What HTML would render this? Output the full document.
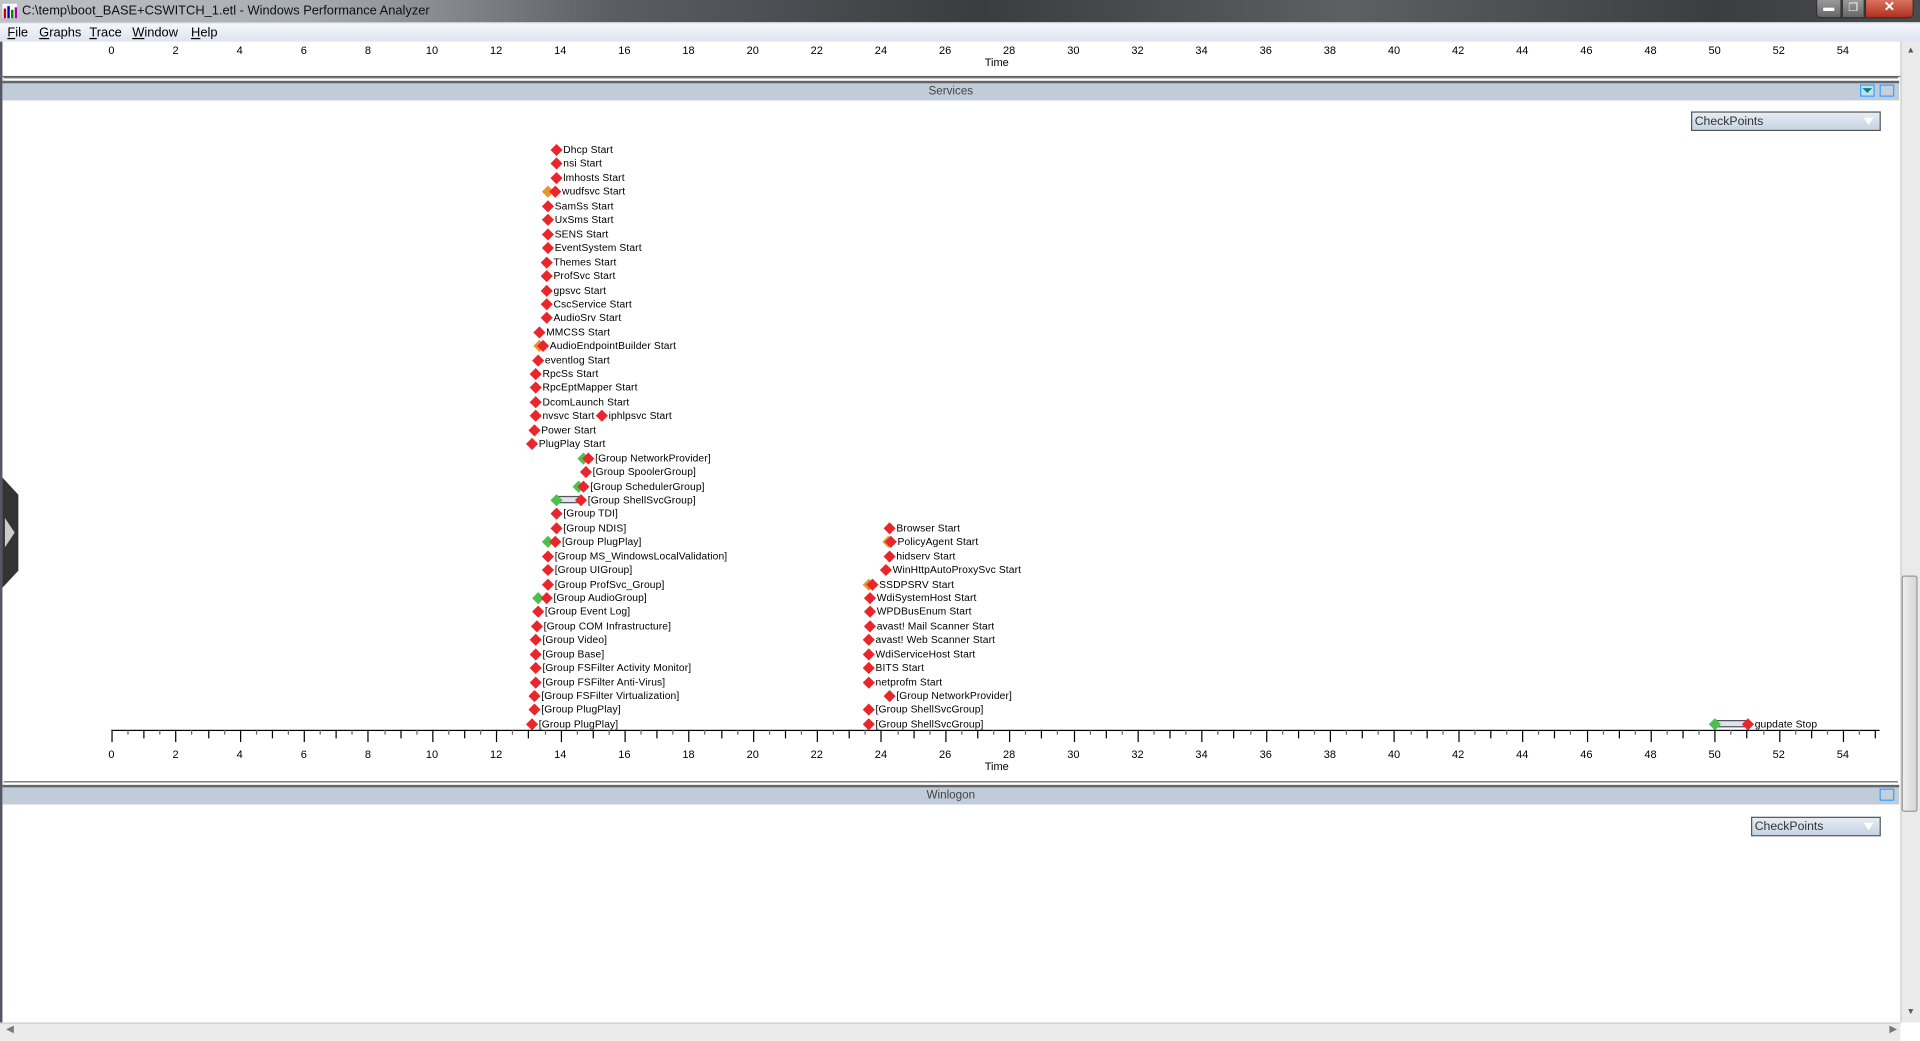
<!DOCTYPE html>
<html><head><meta charset="utf-8"><style>
html,body{margin:0;padding:0;width:1920px;height:1040px;overflow:hidden;background:#fff}
#root{position:absolute;left:0;top:0;width:1568px;height:849px;transform:scale(1.22449);transform-origin:0 0;font-family:"Liberation Sans",Arial,sans-serif;background:#fff}
.a{position:absolute}
#title{left:0;top:0;width:1568px;height:18px;background:linear-gradient(90deg,#bfc3c7 0,#a8adb2 250px,#5a5e62 500px,#3a3c3f 800px,#5d6063 1100px,#3b3d40 1400px,#4a4c4f 1568px)}
#title span{position:absolute;left:18px;top:3px;font-size:10.5px;color:#111}
#menu{left:0;top:18px;width:1568px;height:16px;background:linear-gradient(#f4f6fb,#dfe4f1);border-top:1px solid #c8ccd4;box-sizing:border-box}
#menu span{position:absolute;top:2px;font-size:10.5px;color:#000}
.hdr{left:2px;width:1549px;height:14px;background:#c0ccd8;border-top:2px solid #666;box-shadow:0 -3px 0 -1px #fff,0 -4px 0 -1px #666}
.hdr span{position:absolute;width:100%;text-align:center;top:1px;font-size:9.5px;color:#444}
.lbl{position:absolute;font-size:8.4px;color:#000;white-space:nowrap;line-height:9px;letter-spacing:0.1px}
.d{position:absolute;width:7px;height:7px;transform:rotate(45deg)}
.r{background:#e8262b}.o{background:#e8962a}.g{background:#4cc04c}
.tl{position:absolute;font-size:9px;color:#000;transform:translateX(-50%)}
.tk{position:absolute;width:1px;background:#000}
.cp{position:absolute;height:16px;border:1px solid #555;background:linear-gradient(#e6edf5,#c5d3e3);font-size:10px;color:#333;box-sizing:border-box;padding:2px 0 0 2px}
.cp i{position:absolute;right:5px;top:4px;width:0;height:0;border-left:4px solid transparent;border-right:4px solid transparent;border-top:6px solid #fff}
.btn{position:absolute;width:12px;height:10px;border:1px solid #3aa0ff;background:#c5d0dc;box-sizing:border-box}
.wb{position:absolute;top:0;height:15px;border:1px solid #333;border-top:none;box-sizing:border-box;color:#fff;font-size:9px;text-align:center;line-height:13px}
</style></head><body><div id="root">
<div id="title" class="a"><svg class="a" style="left:2px;top:3px" width="12" height="12"><rect width="12" height="12" fill="#fff"/><rect x="1" y="4" width="2" height="8" fill="#c00"/><rect x="4" y="2" width="2" height="10" fill="#00c"/><rect x="7" y="5" width="2" height="7" fill="#080"/><rect x="10" y="3" width="2" height="9" fill="#a0a"/></svg><span>C:\temp\boot_BASE+CSWITCH_1.etl - Windows Performance Analyzer</span>
<div class="wb" style="left:1483px;width:21px;background:linear-gradient(#999,#666);border-radius:0 0 0 4px">▬</div>
<div class="wb" style="left:1504px;width:19px;background:linear-gradient(#999,#666)">❐</div>
<div class="wb" style="left:1523px;width:40px;background:linear-gradient(#d9735f,#b0301e);border-radius:0 0 4px 0;font-weight:bold;font-size:11px">✕</div></div>
<div id="menu" class="a"><span style="left:6px"><u>F</u>ile</span><span style="left:32px"><u>G</u>raphs</span><span style="left:73px"><u>T</u>race</span><span style="left:108px"><u>W</u>indow</span><span style="left:156px"><u>H</u>elp</span></div>
<div class="a" style="left:0;top:34px;width:2px;height:801px;background:#556"></div>
<div id="ax1" class="a" style="left:0;top:34px;width:1552px;height:30px"></div>
<div class="a hdr" style="top:66px"><span>Services</span>
<div class="btn" style="left:1517px;top:1px;background:#bfe0f0"><div style="margin:2px auto;width:0;height:0;border-left:4px solid transparent;border-right:4px solid transparent;border-top:4px solid #087"></div></div>
<div class="btn" style="left:1533px;top:1px"></div></div>
<div class="cp" style="left:1381px;top:91px;width:155px">CheckPoints<i></i></div>
<svg class="a" style="left:0;top:390px" width="16" height="90"><polygon points="2,0 15,14 15,76 2,90" fill="#333"/><polygon points="4,33 12,45 4,57" fill="#ccc"/></svg>
<div id="ev" class="a" style="left:0;top:0"></div>
<div id="ax2" class="a" style="left:0;top:596px;width:1552px;height:36px"></div>
<div class="a hdr" style="top:641px"><span>Winlogon</span><div class="btn" style="left:1533px;top:1px"></div></div>
<div class="cp" style="left:1430px;top:667px;width:106px">CheckPoints<i></i></div>
<div class="a" style="left:1552px;top:34px;width:16px;height:801px;background:#eaeaea;border-left:1px solid #ccc"></div>
<div class="a" style="left:1553px;top:470px;width:13px;height:193px;background:linear-gradient(90deg,#eee,#d6d6d6);border:1px solid #999;border-radius:2px;box-sizing:border-box"></div>
<div class="a" style="left:1557px;top:38px;font-size:7px;color:#555">▲</div>
<div class="a" style="left:1557px;top:823px;font-size:7px;color:#555">▼</div>
<div class="a" style="left:0;top:835px;width:1552px;height:14px;background:#eaeaea;border-top:1px solid #ccc"></div>
<div class="a" style="left:5px;top:836px;font-size:8px;color:#777">◀</div>
<div class="a" style="left:1543px;top:836px;font-size:8px;color:#777">▶</div>
</div>
<script>
var x0=91,u=(1505-91)/54;
function axis(id,ticks,labY,timeY){var e=document.getElementById(id),h='';
 if(ticks){h+='<div class="a" style="left:'+x0+'px;top:0;width:'+(1535-x0)+'px;height:1px;background:#000"></div>';
 for(var i=0;i<=110;i++){var x=x0+i*u/2;if(x>1535)break;var len=i%4==0?10:(i%2==0?7:4);
 h+='<div class="tk" style="left:'+x+'px;top:0;height:'+len+'px;background:'+(i%2?'#666':'#000')+'"></div>';}}
 for(var v=0;v<=54;v+=2)h+='<div class="tl" style="left:'+(x0+v*u)+'px;top:'+labY+'px">'+v+'</div>';
 h+='<div class="tl" style="left:814px;top:'+timeY+'px">Time</div>';
 if(!ticks)h+='<div class="a" style="left:0;top:28px;width:1552px;height:1px;background:#666"></div>';
 e.innerHTML=h;}
axis('ax1',false,2,12);axis('ax2',true,15,25);
var E=[[122,454,'Dhcp Start'],[133,454,'nsi Start'],[145,454,'lmhosts Start'],[156,453,'wudfsvc Start','o',447],[168,447,'SamSs Start'],[179,447,'UxSms Start'],[191,447,'SENS Start'],[202,447,'EventSystem Start'],[214,446,'Themes Start'],[225,446,'ProfSvc Start'],[237,446,'gpsvc Start'],[248,446,'CscService Start'],[259,446,'AudioSrv Start'],[271,440,'MMCSS Start'],[282,443,'AudioEndpointBuilder Start','o',440],[294,439,'eventlog Start'],[305,437,'RpcSs Start'],[316,437,'RpcEptMapper Start'],[328,437,'DcomLaunch Start'],[339,437,'nvsvc Start'],[339,491,'iphlpsvc Start'],[351,436,'Power Start'],[362,434,'PlugPlay Start'],
[374,480,'[Group NetworkProvider]','g',476],[385,478,'[Group SpoolerGroup]'],[397,476,'[Group SchedulerGroup]','g',472],[408,474,'[Group ShellSvcGroup]','g',454,1],[419,454,'[Group TDI]'],[431,454,'[Group NDIS]'],[442,453,'[Group PlugPlay]','g',447],[454,447,'[Group MS_WindowsLocalValidation]'],[465,447,'[Group UIGroup]'],[477,447,'[Group ProfSvc_Group]'],[488,446,'[Group AudioGroup]','g',439],[499,439,'[Group Event Log]'],[511,438,'[Group COM Infrastructure]'],[522,437,'[Group Video]'],[534,437,'[Group Base]'],[545,437,'[Group FSFilter Activity Monitor]'],[557,437,'[Group FSFilter Anti-Virus]'],[568,436,'[Group FSFilter Virtualization]'],[579,436,'[Group PlugPlay]'],[591,434,'[Group PlugPlay]'],
[431,726,'Browser Start'],[442,727,'PolicyAgent Start','o',725],[454,726,'hidserv Start'],[465,723,'WinHttpAutoProxySvc Start'],[477,712,'SSDPSRV Start','o',709],[488,710,'WdiSystemHost Start'],[499,710,'WPDBusEnum Start'],[511,710,'avast! Mail Scanner Start'],[522,709,'avast! Web Scanner Start'],[534,709,'WdiServiceHost Start'],[545,709,'BITS Start'],[557,709,'netprofm Start'],[568,726,'[Group NetworkProvider]'],[579,709,'[Group ShellSvcGroup]'],[591,709,'[Group ShellSvcGroup]'],
[591,1427,'gupdate Stop','g',1400,1]];
var h='';E.forEach(function(e){var y=e[0],x=e[1];
 if(e[3]){if(e[5])h+='<div class="a" style="left:'+e[4]+'px;top:'+(y-3)+'px;width:'+(x-e[4])+'px;height:6px;background:#e0e0f8;border:1px solid #555;box-sizing:border-box"></div>';
 h+='<div class="d '+e[3]+'" style="left:'+(e[4]-3.5)+'px;top:'+(y-3.5)+'px"></div>';}
 h+='<div class="d r" style="left:'+(x-3.5)+'px;top:'+(y-3.5)+'px"></div>';
 h+='<div class="lbl" style="left:'+(x+6)+'px;top:'+(y-4)+'px">'+e[2]+'</div>';});
document.getElementById('ev').innerHTML=h;
</script>
</body></html>
